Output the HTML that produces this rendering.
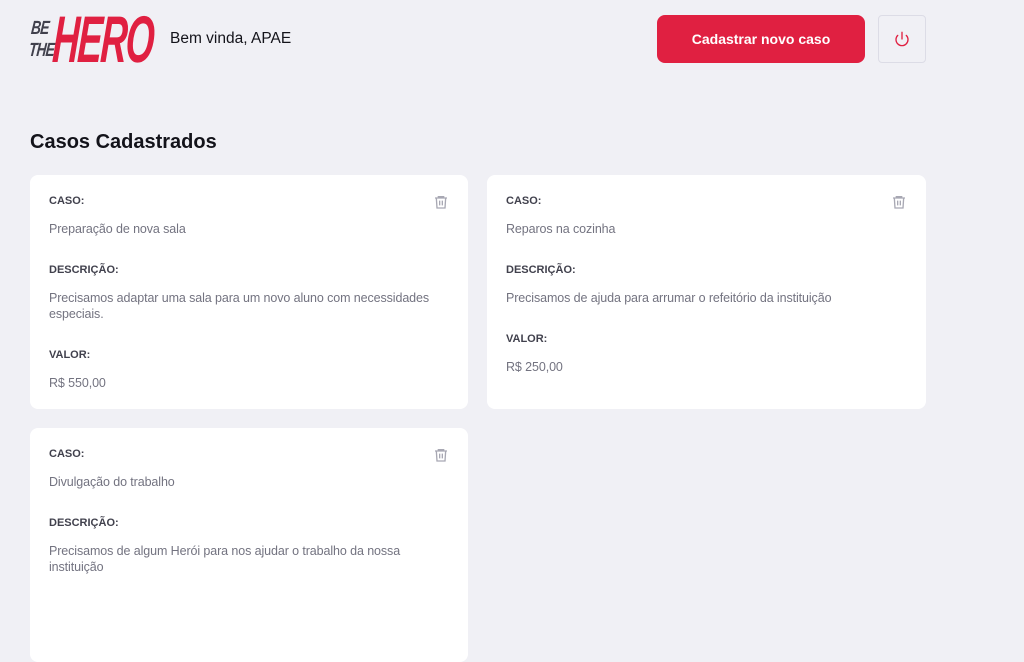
<!DOCTYPE html>
<html><head><meta charset="utf-8"><style>
*{margin:0;padding:0;box-sizing:border-box}
body{width:1024px;height:593px;overflow:hidden;background:#f0f0f5;font-family:"Liberation Sans",Roboto,sans-serif;position:relative}
.abs{position:absolute}
.logo1{left:30px;top:18px;font:italic 900 19px/22px "Liberation Sans",sans-serif;color:#41414d;letter-spacing:-1px;transform:scaleX(0.72) skewX(-8deg);transform-origin:left}
.logo2{left:53px;top:6px;font:italic 900 66px/66px "Liberation Sans",sans-serif;color:#e02041;letter-spacing:-3px;transform:scaleX(0.56) skewX(-6deg);transform-origin:left}
.welcome{left:170px;top:30px;font-size:15.5px;color:#13131a}
.btn{left:657px;top:15px;width:208px;height:48px;background:#e02041;border-radius:8px;color:#fff;font-weight:bold;font-size:14px;text-align:center;line-height:48px}
.pw{left:878px;top:15px;width:48px;height:48px;border:1px solid #dcdce6;border-radius:4px;display:flex;align-items:center;justify-content:center}
h1{position:absolute;left:30px;top:131px;font-size:20px;color:#13131a;font-weight:bold}
.card{position:absolute;background:#fff;border-radius:8px;width:438px;padding:20px 19px}
.card strong{display:block;font-size:11px;color:#41414d;line-height:13px}
.card p{font-size:12.5px;letter-spacing:-0.1px;color:#737380;line-height:16px;margin-top:13px;margin-bottom:27px}
.card p:last-child{margin-bottom:0}
.tr{position:absolute;right:19px;top:19px}
</style></head><body>
<div class="abs logo1">BE<br>THE</div>
<div class="abs logo2">HERO</div>
<div class="abs welcome">Bem vinda, APAE</div>
<div class="abs btn">Cadastrar novo caso</div>
<div class="abs pw"><svg width="16" height="16" viewBox="0 0 24 24" fill="none" stroke="#e02041" stroke-width="2" stroke-linecap="round"><path d="M18.4 6.6a9 9 0 1 1-12.8 0"/><path d="M12 2v10"/></svg></div>
<h1>Casos Cadastrados</h1>
<div class="card" style="left:30px;top:175px;height:234px">
<svg class="tr" width="16" height="16" viewBox="0 0 24 24" fill="none" stroke="#a8a8b3" stroke-width="2"><path d="M3 6h18M8 6V4h8v2M5 6l1 15h12l1-15M10 10v7M14 10v7"/></svg>
<strong>CASO:</strong><p>Preparação de nova sala</p>
<strong>DESCRIÇÃO:</strong><p>Precisamos adaptar uma sala para um novo aluno com necessidades especiais.</p>
<strong>VALOR:</strong><p>R$ 550,00</p></div>
<div class="card" style="left:487px;top:175px;height:234px;width:439px">
<svg class="tr" width="16" height="16" viewBox="0 0 24 24" fill="none" stroke="#a8a8b3" stroke-width="2"><path d="M3 6h18M8 6V4h8v2M5 6l1 15h12l1-15M10 10v7M14 10v7"/></svg>
<strong>CASO:</strong><p>Reparos na cozinha</p>
<strong>DESCRIÇÃO:</strong><p>Precisamos de ajuda para arrumar o refeitório da instituição</p>
<strong>VALOR:</strong><p>R$ 250,00</p></div>
<div class="card" style="left:30px;top:428px;height:234px">
<svg class="tr" width="16" height="16" viewBox="0 0 24 24" fill="none" stroke="#a8a8b3" stroke-width="2"><path d="M3 6h18M8 6V4h8v2M5 6l1 15h12l1-15M10 10v7M14 10v7"/></svg>
<strong>CASO:</strong><p>Divulgação do trabalho</p>
<strong>DESCRIÇÃO:</strong><p>Precisamos de algum Herói para nos ajudar o trabalho da nossa instituição</p></div>
</body></html>
